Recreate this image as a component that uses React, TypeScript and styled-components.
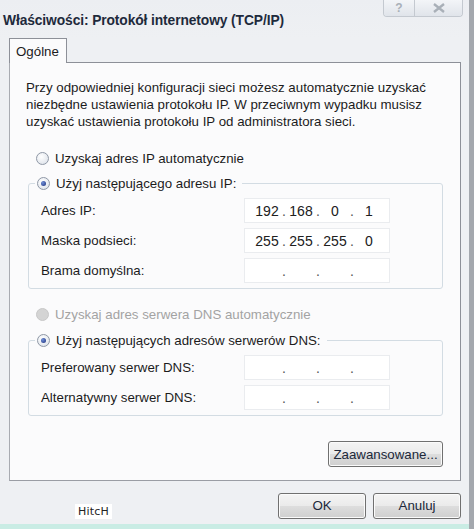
import React from "react";
import styled, { createGlobalStyle } from "styled-components";

const GlobalStyle = createGlobalStyle`
  html, body {
    margin: 0;
    padding: 0;
    background: #eef0f3;
  }
  body {
    font-family: "Liberation Sans", Arial, sans-serif;
    font-size: 13px;
    color: #1c1c1c;
  }
`;

const ipRows = [
  { label: "Adres IP:", value: ["192", "168", "0", "1"] },
  { label: "Maska podsieci:", value: ["255", "255", "255", "0"] },
  { label: "Brama domyślna:", value: ["", "", "", ""] },
];

const dnsRows = [
  { label: "Preferowany serwer DNS:", value: ["", "", "", ""] },
  { label: "Alternatywny serwer DNS:", value: ["", "", "", ""] },
];

function Radio({ checked, disabled }: { checked?: boolean; disabled?: boolean }) {
  return (
    <RadioCircle $disabled={disabled}>
      {checked && <RadioDot />}
    </RadioCircle>
  );
}

function IpField({ value }: { value: string[] }) {
  return (
    <IpBox>
      {value.map((part, i) => (
        <React.Fragment key={i}>
          <Octet>{part}</Octet>
          {i < 3 && <Dot>.</Dot>}
        </React.Fragment>
      ))}
    </IpBox>
  );
}

function App() {
  return (
    <Window>
      <GlobalStyle />
      <TitleBar>
        <Title>Właściwości: Protokół internetowy (TCP/IP)</Title>
        <CaptionButtons>
          <CaptionButton $width={30}>?</CaptionButton>
          <CaptionButton $width={47}>
            <svg width="14" height="10" viewBox="0 0 14 10">
              <path
                d="M2 1 L12 9 M12 1 L2 9"
                stroke="#a9b0b8"
                strokeWidth="2.4"
                fill="none"
              />
            </svg>
          </CaptionButton>
        </CaptionButtons>
      </TitleBar>

      <Body>
        <TabStrip>
          <Tab>Ogólne</Tab>
        </TabStrip>
        <Panel>
          <Intro>
            Przy odpowiedniej konfiguracji sieci możesz automatycznie uzyskać
            <br />
            niezbędne ustawienia protokołu IP. W przeciwnym wypadku musisz
            <br />
            uzyskać ustawienia protokołu IP od administratora sieci.
          </Intro>

          <RadioRow $top={18}>
            <Radio />
            <span>Uzyskaj adres IP automatycznie</span>
          </RadioRow>

          <Group $top={5}>
            <Legend>
              <Radio checked />
              <span>Użyj następującego adresu IP:</span>
            </Legend>
            <Rows>
              {ipRows.map((row) => (
                <FieldRow key={row.label}>
                  <span>{row.label}</span>
                  <IpField value={row.value} />
                </FieldRow>
              ))}
            </Rows>
          </Group>

          <RadioRow $top={15} $disabled>
            <Radio disabled />
            <span>Uzyskaj adres serwera DNS automatycznie</span>
          </RadioRow>

          <Group $top={6}>
            <Legend>
              <Radio checked />
              <span>Użyj następujących adresów serwerów DNS:</span>
            </Legend>
            <Rows>
              {dnsRows.map((row) => (
                <FieldRow key={row.label}>
                  <span>{row.label}</span>
                  <IpField value={row.value} />
                </FieldRow>
              ))}
            </Rows>
          </Group>

          <AdvancedRow>
            <Button $width={115}>Zaawansowane...</Button>
          </AdvancedRow>
        </Panel>

        <Footer>
          <Watermark>HitcH</Watermark>
          <Button $width={88}>OK</Button>
          <Button $width={88}>Anuluj</Button>
        </Footer>
      </Body>
      <BottomStrip />
    </Window>
  );
}

const Window = styled.div`
  width: 474px;
  height: 529px;
  box-sizing: border-box;
  display: flex;
  flex-direction: column;
  background: #eef0f3;
  border-right: 5px solid #a4a8ae;
  overflow: hidden;
`;

const TitleBar = styled.div`
  height: 38px;
  display: flex;
  justify-content: space-between;
  align-items: flex-start;
  padding-left: 3px;
  background: linear-gradient(#eceef2, #eef0f3);
`;

const Title = styled.div`
  margin-top: 13px;
  font-size: 13.8px;
  font-weight: bold;
  color: #1e2a3c;
  letter-spacing: -0.1px;
`;

const CaptionButtons = styled.div`
  display: flex;
  margin-right: 6px;
  border: 1px solid #c4c9d0;
  border-top: none;
  border-radius: 0 0 4px 4px;
  overflow: hidden;
`;

const CaptionButton = styled.div<{ $width: number }>`
  width: ${({ $width }) => $width}px;
  height: 16px;
  display: flex;
  align-items: center;
  justify-content: center;
  background: linear-gradient(#f3f5f8, #e0e4ea);
  color: #a9b0b8;
  font-weight: bold;
  font-size: 12px;
  & + & {
    border-left: 1px solid #c4c9d0;
  }
`;

const Body = styled.div`
  flex: 1;
  display: flex;
  flex-direction: column;
  padding: 0 8px 0 9px;
`;

const TabStrip = styled.div`
  display: flex;
  height: 25px;
  margin-bottom: -1px;
`;

const Tab = styled.div`
  width: 58px;
  box-sizing: border-box;
  padding: 5px 0 0 6px;
  background: #fbfbfc;
  border: 1px solid #8d9098;
  border-bottom: none;
  position: relative;
  z-index: 1;
  font-size: 13.3px;
`;

const Panel = styled.div`
  height: 419px;
  box-sizing: border-box;
  display: flex;
  flex-direction: column;
  padding: 16px 17px 0 16px;
  background: #fbfbfc;
  border: 1px solid #8d9098;
  border-color: #8d9098 #8d9098 #9a9da4 #a8abb1;
`;

const Intro = styled.p`
  margin: 0;
  line-height: 17px;
  font-size: 13.3px;
`;

const RadioRow = styled.div<{ $top: number; $disabled?: boolean }>`
  display: flex;
  align-items: center;
  gap: 6px;
  height: 20px;
  margin-top: ${({ $top }) => $top}px;
  padding-left: 10px;
  font-size: 13.3px;
  color: ${({ $disabled }) => ($disabled ? "#a3a3a3" : "#1c1c1c")};
`;

const RadioCircle = styled.span<{ $disabled?: boolean }>`
  width: 11px;
  height: 11px;
  border-radius: 50%;
  display: flex;
  align-items: center;
  justify-content: center;
  flex-shrink: 0;
  border: 1px solid ${({ $disabled }) => ($disabled ? "#c8c8c8" : "#8f98a6")};
  background: ${({ $disabled }) =>
    $disabled
      ? "#d4d4d4"
      : "radial-gradient(circle at 40% 35%, #ffffff, #e4e8ee 70%, #cfd5de)"};
`;

const RadioDot = styled.span`
  width: 5px;
  height: 5px;
  border-radius: 50%;
  background: radial-gradient(circle at 35% 35%, #6f8fd8, #1d2f7a);
`;

const Group = styled.fieldset<{ $top: number }>`
  margin: ${({ $top }) => $top}px 0 0 2px;
  padding: 0 52px 5px 12px;
  border: 1px solid #d3dce3;
  border-radius: 3px;
  min-width: 0;
  font-size: 13.3px;
`;

const Legend = styled.legend`
  display: flex;
  align-items: center;
  gap: 6px;
  height: 20px;
  padding: 0 6px 0 2px;
  margin-left: -6px;
`;

const Rows = styled.div`
  display: flex;
  flex-direction: column;
  gap: 5px;
  margin-top: 5px;
`;

const FieldRow = styled.div`
  display: flex;
  align-items: center;
  justify-content: space-between;
`;

const IpBox = styled.div`
  width: 146px;
  height: 25px;
  box-sizing: border-box;
  display: flex;
  align-items: center;
  padding: 0 0 0 9px;
  background: #ffffff;
  border: 1px solid #eaecef;
  font-size: 14px;
  color: #202020;
`;

const Octet = styled.span`
  width: 26px;
  text-align: center;
`;

const Dot = styled.span`
  width: 8px;
  text-align: center;
  color: #555555;
`;

const AdvancedRow = styled.div`
  display: flex;
  justify-content: flex-end;
  margin-top: 25px;
`;

const Button = styled.div<{ $width: number }>`
  width: ${({ $width }) => $width}px;
  height: 26px;
  box-sizing: border-box;
  display: flex;
  align-items: center;
  justify-content: center;
  border: 1px solid #707070;
  border-radius: 3px;
  background: linear-gradient(#f4f4f4 0%, #ebebeb 48%, #dddddd 52%, #cfcfcf 100%);
  box-shadow: inset 0 0 0 1px #fbfbfb;
  color: #20283a;
  font-size: 13.3px;
`;

const Footer = styled.div`
  display: flex;
  align-items: center;
  gap: 7px;
  margin-top: 11px;
  padding-right: 0;
`;

const Watermark = styled.div`
  margin: 12px auto 0 66px;
  padding: 1px 3px;
  background: #ffffff;
  font-family: "DejaVu Sans", sans-serif;
  font-size: 11px;
  color: #222222;
  letter-spacing: 0.2px;
`;

const BottomStrip = styled.div`
  height: 5px;
  margin-top: auto;
  background: #c9ece4;
`;

export default App;
